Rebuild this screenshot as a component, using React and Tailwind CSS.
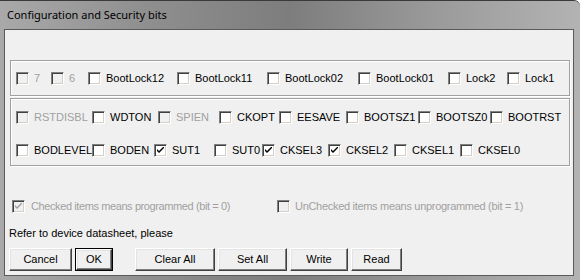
import React from 'react';

const FONT = { fontFamily: '"Liberation Sans", Arial, sans-serif' };

const Check = ({ checked, disabled }) => (
  <span
    className={`inline-flex w-[13px] h-[13px] shrink-0 items-center justify-center border border-t-[#808080] border-l-[#808080] border-b-white border-r-white shadow-[inset_1px_1px_0_#404040,inset_-1px_-1px_0_#d4d0c8] ${
      disabled ? 'bg-[#f0f0f0]' : 'bg-white'
    }`}
  >
    {checked && (
      <svg width="7" height="7" viewBox="0 0 7 7">
        <path
          d="M0 2 L0 4 L2 6 L7 1 L7 -1 L2 4 Z"
          fill={disabled ? '#a0a0a0' : '#000'}
        />
      </svg>
    )}
  </span>
);

const Item = ({ label, w, checked, disabled }) => (
  <div className="flex items-center gap-[5px] shrink-0" style={w ? { width: w } : undefined}>
    <Check checked={checked} disabled={disabled} />
    <span className={`text-[11px] leading-none ${disabled ? 'text-[#a0a0a0]' : 'text-black'}`}>
      {label}
    </span>
  </div>
);

const Button = ({ children, w, def }) => (
  <div
    className={`h-[23px] flex ${def ? 'border border-black' : ''}`}
    style={{ width: w }}
  >
    <button className="flex-1 flex items-center justify-center bg-[#f0f0f0] border border-t-white border-l-white border-b-[#404040] border-r-[#404040] shadow-[inset_-1px_-1px_0_#808080,inset_1px_1px_0_#e3e3e3] text-[11px] text-black">
      {children}
    </button>
  </div>
);

const row1 = [
  { label: '7', w: 35, disabled: true },
  { label: '6', w: 37, disabled: true },
  { label: 'BootLock12', w: 89 },
  { label: 'BootLock11', w: 90 },
  { label: 'BootLock02', w: 91 },
  { label: 'BootLock01', w: 90 },
  { label: 'Lock2', w: 59 },
  { label: 'Lock1' },
];

const row2 = [
  { label: 'RSTDISBL', w: 76, disabled: true },
  { label: 'WDTON', w: 66 },
  { label: 'SPIEN', w: 61, disabled: true },
  { label: 'CKOPT', w: 60 },
  { label: 'EESAVE', w: 67 },
  { label: 'BOOTSZ1', w: 72 },
  { label: 'BOOTSZ0', w: 72 },
  { label: 'BOOTRST' },
];

const row3 = [
  { label: 'BODLEVEL', w: 76 },
  { label: 'BODEN', w: 62 },
  { label: 'SUT1', w: 60, checked: true },
  { label: 'SUT0', w: 48 },
  { label: 'CKSEL3', w: 66, checked: true },
  { label: 'CKSEL2', w: 66, checked: true },
  { label: 'CKSEL1', w: 66 },
  { label: 'CKSEL0' },
];

export default function App() {
  return (
    <div
      className="w-[580px] h-[280px] overflow-hidden rounded-tr-[6px] bg-[linear-gradient(to_right,#a9a9a9,#8f8f8f_25%,#7d7d7d_50%,#9a9a9a_75%,#b3b3b3)] border-t border-[#3a3a3a] flex flex-col"
      style={FONT}
    >
      {/* Title bar */}
      <div className="h-[28px] flex items-center pl-[7px] shrink-0">
        <span className="text-[11px] text-black" style={{ fontFamily: '"Noto Sans", "Open Sans", sans-serif' }}>
          Configuration and Security bits
        </span>
      </div>

      {/* Client area */}
      <div className="ml-[4px] w-[570px] h-[247px] bg-[#f0f0f0] border border-[#5a5a5a] flex flex-col">
        {/* Group 1 */}
        <div className="ml-[5px] mt-[30px] w-[560px] h-[36px] border border-[#a0a0a0] shadow-[1px_1px_0_#fff,inset_1px_1px_0_#fff] flex items-center pl-[5px]">
          {row1.map((it) => (
            <Item key={it.label} {...it} />
          ))}
        </div>

        {/* Group 2 */}
        <div className="ml-[5px] mt-[2px] w-[560px] h-[68px] border border-[#a0a0a0] shadow-[1px_1px_0_#fff,inset_1px_1px_0_#fff] flex flex-col pl-[5px] pt-[12px] gap-[20px]">
          <div className="flex items-center h-[13px]">
            {row2.map((it) => (
              <Item key={it.label} {...it} />
            ))}
          </div>
          <div className="flex items-center h-[13px]">
            {row3.map((it) => (
              <Item key={it.label} {...it} />
            ))}
          </div>
        </div>

        {/* Legend */}
        <div className="flex items-center mt-[34px] pl-[7px] h-[13px]">
          <div className="w-[265px] flex items-center gap-[6px]">
            <Check checked disabled />
            <span className="text-[11px] leading-none text-[#a0a0a0] tracking-[-0.4px]">
              Checked items means programmed (bit = 0)
            </span>
          </div>
          <div className="flex items-center gap-[5px]">
            <Check disabled />
            <span className="text-[11px] leading-none text-[#a0a0a0] tracking-[-0.3px]">
              UnChecked items means unprogrammed (bit = 1)
            </span>
          </div>
        </div>

        <div className="mt-[15px] pl-[4px] text-[11px] leading-none text-black">
          Refer to device datasheet, please
        </div>

        {/* Buttons */}
        <div className="flex mt-[9px] pl-[4px]">
          <Button w={63}>Cancel</Button>
          <div className="ml-[3px]">
            <Button w={38} def>OK</Button>
          </div>
          <div className="ml-[22px]">
            <Button w={80}>Clear All</Button>
          </div>
          <div className="ml-[3px]">
            <Button w={69}>Set All</Button>
          </div>
          <div className="ml-[3px]">
            <Button w={58}>Write</Button>
          </div>
          <div className="ml-[3px]">
            <Button w={51}>Read</Button>
          </div>
        </div>
      </div>
    </div>
  );
}
